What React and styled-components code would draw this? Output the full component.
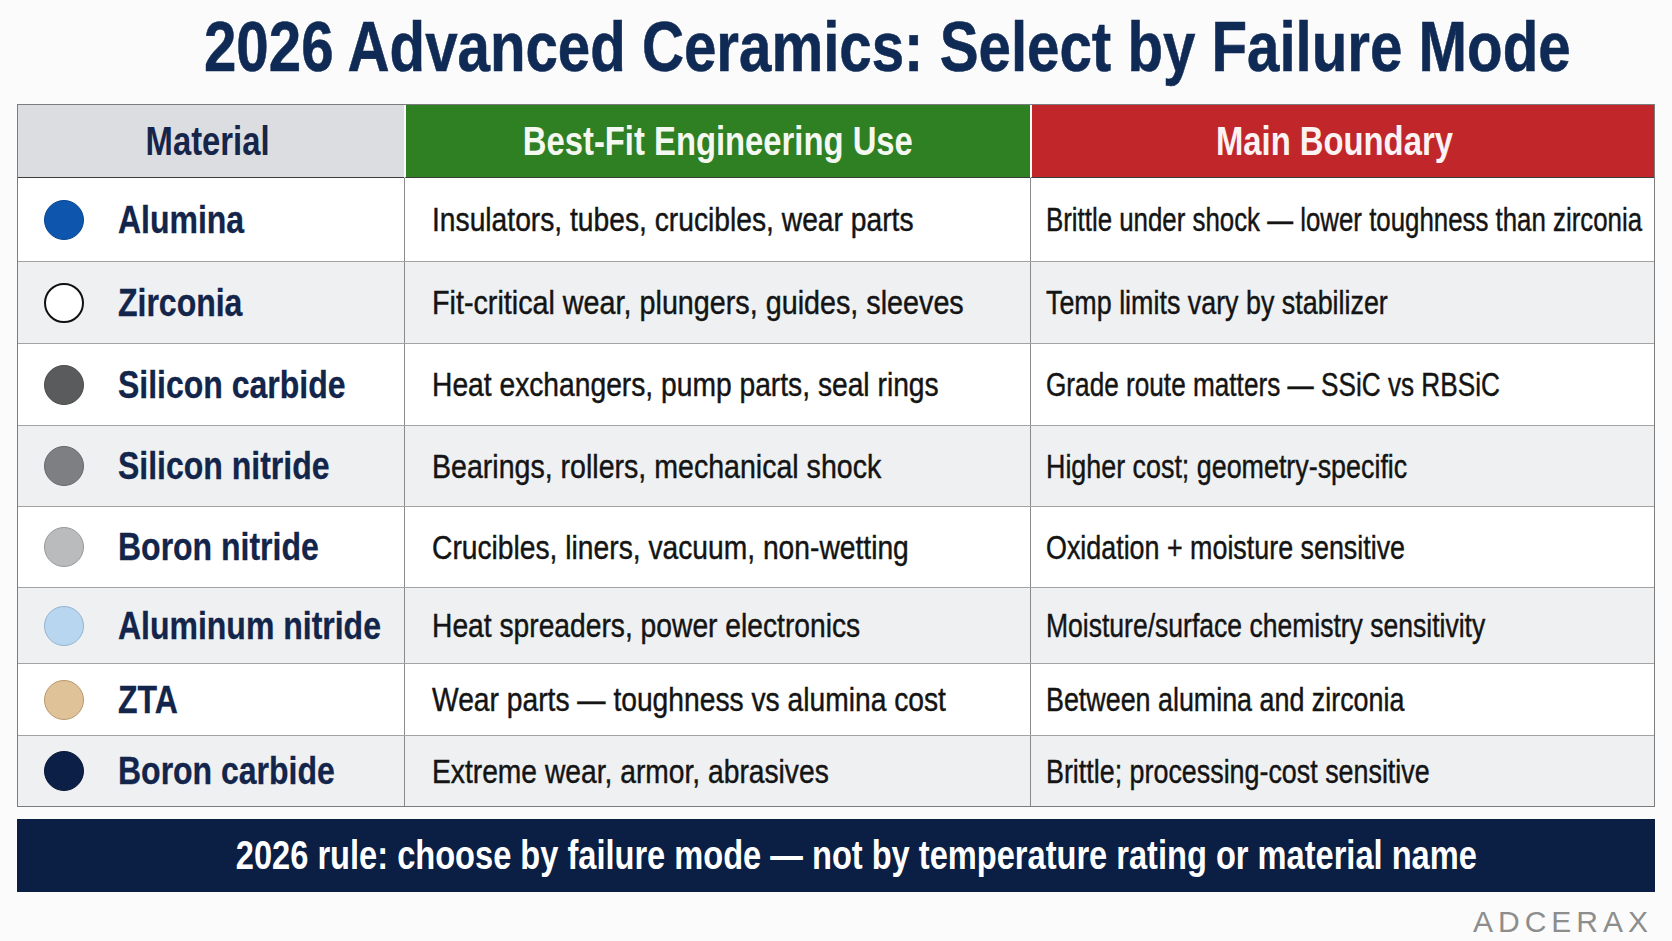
import React from 'react';
import styled, { createGlobalStyle } from 'styled-components';

// no narrow face is installed, so text is drawn in Liberation Sans and squeezed
const sans = `"Liberation Sans", Arial, sans-serif`;

const GlobalStyle = createGlobalStyle`
  html, body {
    margin: 0;
    padding: 0;
    background: #fbfbfb;
  }
  body {
    font-family: ${sans};
  }
`;

const Page = styled.div`
  width: 1672px;
  height: 941px;
  display: flex;
  flex-direction: column;
  background: #fbfbfb;
  overflow: hidden;
`;

const Squeeze = styled.span`
  display: inline-block;
  white-space: nowrap;
  transform: scaleX(${p => p.k || 0.82});
  transform-origin: ${p => p.origin || 'center'};
`;

const Title = styled.h1`
  margin: 11px 0 22px;
  padding-left: 102px;
  display: flex;
  justify-content: center;
  font-size: 71px;
  line-height: 71px;
  font-weight: 700;
  color: #0f2a54;
  -webkit-text-stroke: 0.6px #0f2a54;
`;

const Table = styled.div`
  margin: 0 17px;
  border: 1.5px solid #7c7c7c;
  display: flex;
  flex-direction: column;
`;

const Row = styled.div`
  display: grid;
  grid-template-columns: 386px 626px minmax(0, 1fr);
  height: ${p => p.h}px;
  background: ${p => (p.shade ? '#eef0f2' : '#ffffff')};
  border-top: ${p => (p.first ? 'none' : '1.5px solid #a3a3a3')};
  box-sizing: border-box;
`;

const HeadCell = styled.div`
  display: flex;
  align-items: center;
  justify-content: center;
  background: ${p => p.bg};
  color: ${p => p.fg};
  font-size: 40px;
  font-weight: 700;
  border-left: ${p => (p.first ? 'none' : '2px solid #fbfbfb')};
  border-bottom: 1.5px solid #3c3c3c;
  box-sizing: border-box;
  padding-right: ${p => p.pr || 0}px;
`;

const NameCell = styled.div`
  display: flex;
  align-items: center;
  padding-left: 26px;
  gap: 34px;
`;

const Dot = styled.span`
  flex: none;
  width: 40px;
  height: 40px;
  border-radius: 50%;
  box-sizing: border-box;
  background: ${p => p.fill};
  border: ${p => p.bw || 1}px solid ${p => p.edge};
`;

const Name = styled.span`
  font-size: 39px;
  font-weight: 700;
  color: #13254a;
  -webkit-text-stroke: 0.3px #13254a;
`;

const TextCell = styled.div`
  display: flex;
  align-items: center;
  min-width: 0;
  padding-left: ${p => p.pl}px;
  border-left: 1.5px solid #8a8a8a;
  font-size: 34px;
  color: #141414;
  -webkit-text-stroke: 0.45px #141414;
`;

const Footer = styled.div`
  margin: 12px 17px 0;
  height: 73px;
  background: #0b1f45;
  display: flex;
  align-items: center;
  justify-content: center;
  padding-left: 40px;
  color: #ffffff;
  font-size: 40px;
  font-weight: 700;
`;

const Brand = styled.div`
  align-self: flex-end;
  margin: 13px 19px 0 0;
  font-size: 30px;
  line-height: 34px;
  letter-spacing: 5px;
  color: #8d8d8d;
`;

const rows = [
  { name: 'Alumina', fill: '#0d55ad', edge: '#0a4790', use: 'Insulators, tubes, crucibles, wear parts', limit: 'Brittle under shock — lower toughness than zirconia', lk: 0.76, h: 83 },
  { name: 'Zirconia', fill: '#ffffff', edge: '#111111', bw: 2, use: 'Fit-critical wear, plungers, guides, sleeves', uk: 0.845, limit: 'Temp limits vary by stabilizer', h: 82 },
  { name: 'Silicon carbide', fill: '#5a5b5d', edge: '#4a4b4d', use: 'Heat exchangers, pump parts, seal rings', limit: 'Grade route matters — SSiC vs RBSiC', lk: 0.77, h: 82 },
  { name: 'Silicon nitride', fill: '#7e7f82', edge: '#67686b', use: 'Bearings, rollers, mechanical shock', uk: 0.84, limit: 'Higher cost; geometry-specific', h: 81 },
  { name: 'Boron nitride', fill: '#babbbd', edge: '#98999b', use: 'Crucibles, liners, vacuum, non-wetting', limit: 'Oxidation + moisture sensitive', h: 81 },
  { name: 'Aluminum nitride', fill: '#b8d6ef', edge: '#93b3cf', use: 'Heat spreaders, power electronics', limit: 'Moisture/surface chemistry sensitivity', lk: 0.78, h: 76 },
  { name: 'ZTA', fill: '#dfc297', edge: '#b8996f', use: 'Wear parts — toughness vs alumina cost', limit: 'Between alumina and zirconia', h: 72 },
  { name: 'Boron carbide', fill: '#0c1f46', edge: '#08173a', use: 'Extreme wear, armor, abrasives', limit: 'Brittle; processing-cost sensitive', h: 71 },
];

export default function App() {
  return (
    <Page>
      <GlobalStyle />
      <Title>
        <Squeeze>2026 Advanced Ceramics: Select by Failure Mode</Squeeze>
      </Title>
      <Table>
        <Row h={73} first>
          <HeadCell first bg="#dcdde0" fg="#15264a" pr={6}>
            <Squeeze>Material</Squeeze>
          </HeadCell>
          <HeadCell bg="#2f7f23" fg="#f4f8f0">
            <Squeeze>Best-Fit Engineering Use</Squeeze>
          </HeadCell>
          <HeadCell bg="#c1272a" fg="#fbf3f3" pr={18}>
            <Squeeze>Main Boundary</Squeeze>
          </HeadCell>
        </Row>
        {rows.map((r, i) => (
          <Row key={r.name} h={r.h} shade={i % 2 === 1} first={i === 0}>
            <NameCell>
              <Dot fill={r.fill} edge={r.edge} bw={r.bw} />
              <Name>
                <Squeeze origin="left">{r.name}</Squeeze>
              </Name>
            </NameCell>
            <TextCell pl={27}>
              <Squeeze k={r.uk || 0.83} origin="left">{r.use}</Squeeze>
            </TextCell>
            <TextCell pl={15}>
              <Squeeze k={r.lk || 0.79} origin="left">{r.limit}</Squeeze>
            </TextCell>
          </Row>
        ))}
      </Table>
      <Footer>
        <Squeeze k={0.815}>2026 rule: choose by failure mode — not by temperature rating or material name</Squeeze>
      </Footer>
      <Brand>ADCERAX</Brand>
    </Page>
  );
}
